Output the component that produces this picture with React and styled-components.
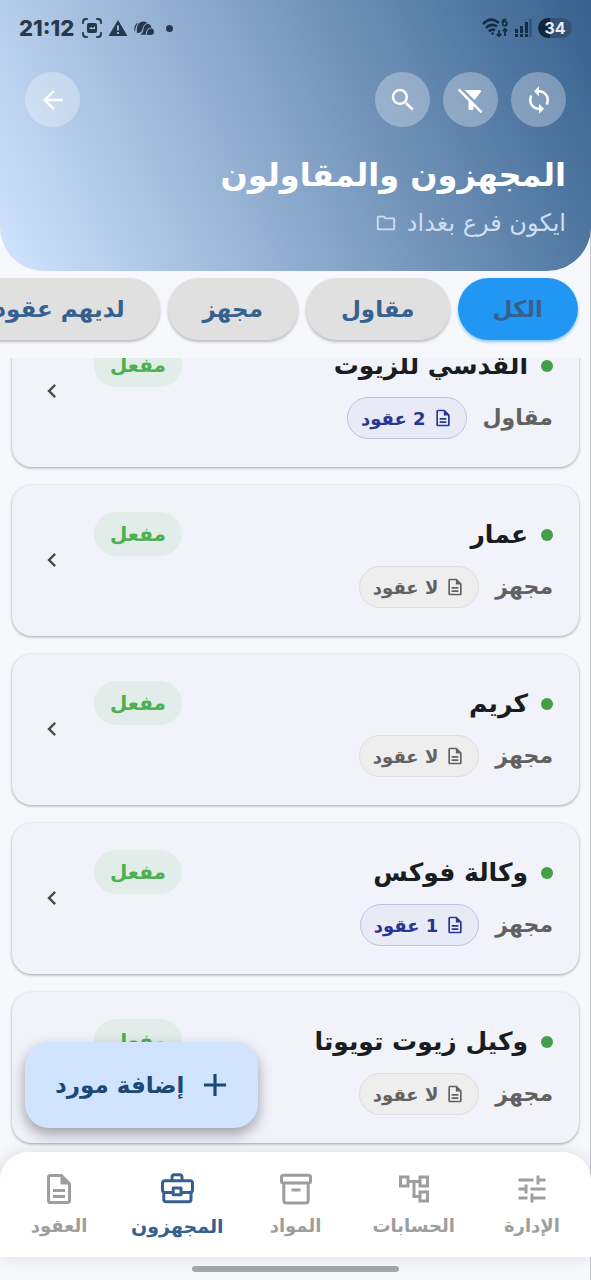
import React from "react"
import styled, { createGlobalStyle } from "styled-components"
import {
  MdAdd,
  MdArrowBack,
  MdChevronLeft,
  MdFilterAltOff,
  MdOutlineAccountTree,
  MdOutlineDescription,
  MdOutlineFolder,
  MdSearch,
  MdSync,
  MdTune,
} from "react-icons/md"

const GlobalStyle = createGlobalStyle`
  * {
    box-sizing: border-box;
  }

  body {
    margin: 0;
    background: #f6f8fc;
    font-family: "DejaVu Sans", "Noto Sans", sans-serif;
  }

  button {
    font-family: inherit;
    border: 0;
    cursor: pointer;
  }
`

const suppliers = [
  { name: "القدسي للزيوت", type: "مقاول", contracts: 2 },
  { name: "عمار", type: "مجهز", contracts: 0 },
  { name: "كريم", type: "مجهز", contracts: 0 },
  { name: "وكالة فوكس", type: "مجهز", contracts: 1 },
  { name: "وكيل زيوت تويوتا", type: "مجهز", contracts: 0 },
]

const filters = ["الكل", "مقاول", "مجهز", "لديهم عقود"]

const BriefcaseIcon = () => (
  <svg viewBox="0 0 36 36" fill="none" stroke="currentColor" strokeWidth="3" strokeLinejoin="round">
    <path d="M13 9.5V6.2Q13 3.8 15.5 3.8h5Q23 3.8 23 6.2v3.3" />
    <path d="M13.5 21.5H6q-2.5 0-2.5-2.5v-6.8q0-2.5 2.5-2.5h25q2.5 0 2.5 2.5V19q0 2.5-2.5 2.5h-8" />
    <path d="M4.8 21.5v6.8q0 2.4 2.4 2.4h22.4q2.4 0 2.4-2.4v-6.8" />
    <rect x="14.2" y="17" width="7.8" height="6.8" />
  </svg>
)

const BoxIcon = () => (
  <svg viewBox="0 0 36 36" fill="none" stroke="currentColor" strokeWidth="3" strokeLinejoin="round">
    <rect x="3.5" y="4.3" width="29" height="7.8" rx="2" />
    <path d="M5.8 12.5v17q0 2.5 2.5 2.5h19.4q2.5 0 2.5-2.5v-17M13.5 19h9" />
  </svg>
)

const tabs = [
  { label: "الإدارة", icon: <MdTune /> },
  { label: "الحسابات", icon: <MdOutlineAccountTree /> },
  { label: "المواد", icon: <BoxIcon /> },
  { label: "المجهزون", icon: <BriefcaseIcon />, active: true },
  { label: "العقود", icon: <MdOutlineDescription /> },
]

const CaptureIcon = () => (
  <svg viewBox="0 0 20 20" width="20" height="20" fill="none" stroke="currentColor" strokeWidth="2" strokeLinecap="round">
    <path d="M1 5V4q0-3 3-3h1M15 1h1q3 0 3 3v1M19 15v1q0 3-3 3h-1M5 19H4q-3 0-3-3v-1" />
    <path fill="currentColor" stroke="none" fillRule="evenodd" d="M7 5h6q2 0 2 2v6q0 2-2 2H7q-2 0-2-2V7q0-2 2-2zm0 6 2-2 2 1 2-2v3z" />
  </svg>
)

const WarningIcon = () => (
  <svg viewBox="0 0 20 18" width="20" height="18" fill="currentColor">
    <path fillRule="evenodd" d="M10 1 19.5 17H.5zM9 6.5v5h2v-5zM9 13v2h2v-2z" />
  </svg>
)

const CloudIcon = () => (
  <svg viewBox="0 0 20 15" width="20" height="15" fill="currentColor">
    <path d="M2.5 2.5Q-1 6 1 11.5Q.8 6 4 2z" />
    <path d="M3 12Q2 4 6 1.5Q10-.5 13.5 2Q9.5 3 8.5 8Q7.5 12.5 3 12z" />
    <path d="M6 13.8Q9.200 12 9.500 8Q10.200 3 14.500 2.800Q17 4 17.500 6.600Q12.500 6 11.800 13.800z" />
    <path d="M12.7 14Q13 7.5 17 7.3Q20 8 20 10.7Q20 14 16.5 14z" />
  </svg>
)

const WifiIcon = () => (
  <svg viewBox="0 0 27 20" width="27" height="20" fill="none" stroke="currentColor" strokeWidth="2.6">
    <path d="M1 6Q9-2 17 5M4 10Q9 4.5 15 8.5M7 13.5Q10 10.5 13 12.5" />
    <circle cx="10.5" cy="15.5" r="1.3" fill="currentColor" stroke="none" />
    <path strokeWidth="1.8" d="M17 12v6M14.8 16l2.200 2 2.200-2M23 18v-7M20.800 13l2.200-2 2.200 2" />
    <path strokeWidth="1.7" d="M24.5 1.5Q20.300.8 20.500 5" />
    <circle cx="22.7" cy="5.500" r="2.100" strokeWidth="1.7" />
  </svg>
)

const SignalIcon = () => (
  <svg viewBox="0 0 17 18" width="17" height="18" fill="currentColor">
    <path d="M0 10h3v4H0zM5 7h3v7H5zM10 3h3v11h-3zM0 15h3v3H0zM5 15h3v3H5zM10 15h3v3h-3z" />
    <path opacity=".35" d="M14 0h3v18h-3z" />
  </svg>
)

export default function App() {
  return (
    <>
      <GlobalStyle />
      <Screen dir="rtl">
        <Header>
          <StatusBar dir="ltr">
            <StatusGroup>
              <Clock>21:12</Clock>
              <CaptureIcon />
              <WarningIcon />
              <CloudIcon />
              <StatusDot />
            </StatusGroup>
            <StatusGroup $dark>
              <WifiIcon />
              <SignalIcon />
              <Battery>34</Battery>
            </StatusGroup>
          </StatusBar>

          <Toolbar>
            <Actions>
              <RoundButton aria-label="تحديث"><MdSync /></RoundButton>
              <RoundButton aria-label="إلغاء التصفية"><MdFilterAltOff /></RoundButton>
              <RoundButton aria-label="بحث"><MdSearch /></RoundButton>
            </Actions>
            <RoundButton aria-label="رجوع"><MdArrowBack /></RoundButton>
          </Toolbar>

          <Title>المجهزون والمقاولون</Title>
          <Branch>
            ايكون فرع بغداد
            <MdOutlineFolder size={22} />
          </Branch>
        </Header>

        <Filters>
          {filters.map((label, index) => (
            <Chip key={label} $active={index === 0}>{label}</Chip>
          ))}
        </Filters>

        <Content>
          <Scroller>
            <Cards>
              {suppliers.map((supplier) => (
                <Card key={supplier.name}>
                  <Info>
                    <NameRow>
                      <Dot />
                      <Name>{supplier.name}</Name>
                    </NameRow>
                    <TypeRow>
                      <Type>{supplier.type}</Type>
                      <Contracts $some={supplier.contracts > 0}>
                        <MdOutlineDescription size={20} />
                        {supplier.contracts > 0 ? `${supplier.contracts} عقود` : "لا عقود"}
                      </Contracts>
                    </TypeRow>
                  </Info>
                  <Status>مفعل</Status>
                  <Chevron><MdChevronLeft size={28} /></Chevron>
                </Card>
              ))}
            </Cards>
          </Scroller>
          <AddButton>
            <MdAdd size={38} />
            إضافة مورد
          </AddButton>
        </Content>

        <TabBar>
          {tabs.map((tab) => (
            <Tab key={tab.label} href="#" $active={tab.active}>
              {tab.icon}
              <span>{tab.label}</span>
            </Tab>
          ))}
        </TabBar>
        <GestureArea>
          <GestureBar />
        </GestureArea>
      </Screen>
    </>
  )
}

const Screen = styled.div`
  display: flex;
  flex-direction: column;
  height: 100vh;
  overflow: hidden;
  background: #f6f8fc;
  box-shadow: inset -1px 0 0 #c3c6cd;
`

const Header = styled.header`
  flex: none;
  padding: 0 25px 32px;
  border-radius: 0 0 44px 44px;
  background: linear-gradient(245deg, #36618e, #d1e4ff);
  color: #fff;
`

const StatusBar = styled.div`
  display: flex;
  justify-content: space-between;
  align-items: center;
  height: 56px;
  margin: 0 -6px;
`

const StatusGroup = styled.div`
  display: flex;
  align-items: center;
  gap: 6px;
  color: ${(props) => (props.$dark ? "#152c44" : "#26394d")};
`

const Clock = styled.span`
  font: 800 22px "Inter", sans-serif;
  margin-right: 2px;
`

const StatusDot = styled.span`
  width: 7px;
  height: 7px;
  margin-left: 6px;
  border-radius: 50%;
  background: currentColor;
`

const Battery = styled.span`
  width: 34px;
  border-radius: 10px;
  background: linear-gradient(to right, #12263b 34%, #35516f 34%);
  color: #e3ecf5;
  font: 700 16px/20px "Inter", sans-serif;
  text-align: center;
`

const Toolbar = styled.div`
  display: flex;
  justify-content: space-between;
  padding-top: 16px;
`

const Actions = styled.div`
  display: flex;
  gap: 13px;
`

const RoundButton = styled.button`
  display: flex;
  justify-content: center;
  align-items: center;
  width: 55px;
  height: 55px;
  padding: 0;
  border-radius: 50%;
  background: rgba(255, 255, 255, 0.3);
  color: #fff;
  font-size: 30px;
`

const Title = styled.h1`
  margin: 24px 0 0;
  font-size: 32px;
  line-height: 48px;
`

const Branch = styled.div`
  display: flex;
  align-items: center;
  gap: 10px;
  margin-top: 8px;
  color: #d0def2;
  font-size: 24px;
  line-height: 32px;
`

const Filters = styled.div`
  display: flex;
  flex: none;
  gap: 8px;
  padding: 7px 13px 18px;
  overflow: hidden;
`

const Chip = styled.button`
  flex: none;
  height: 62px;
  padding: 0 35px;
  border-radius: 31px;
  background: ${(props) => (props.$active ? "#2196f3" : "#e0e0e0")};
  box-shadow: 0 2px 3px ${(props) => (props.$active ? "rgba(33, 150, 243, 0.5)" : "rgba(0, 0, 0, 0.25)")};
  color: #36618e;
  font-size: 23px;
  font-weight: 700;
`

const Content = styled.main`
  position: relative;
  flex: 1;
  min-height: 0;
`

/* reversed so the list opens at its latest entries */
const Scroller = styled.div`
  display: flex;
  flex-direction: column-reverse;
  height: 100%;
  overflow-y: auto;
  scrollbar-width: none;
`

const Cards = styled.div`
  display: flex;
  flex-direction: column;
  gap: 18px;
  padding: 0 12px 9px;
`

const Card = styled.article`
  display: flex;
  align-items: flex-start;
  padding: 27px 26px 28px;
  border-radius: 20px;
  background: #f1f2fa;
  box-shadow: 0 1px 3px rgba(0, 0, 0, 0.35);
`

const Info = styled.div`
  flex: 1;
`

const NameRow = styled.div`
  display: flex;
  align-items: center;
  gap: 13px;
`

const Dot = styled.span`
  width: 12px;
  height: 12px;
  border-radius: 50%;
  background: #43a047;
`

const Name = styled.h2`
  margin: 0;
  color: #191c20;
  font-size: 25px;
  line-height: 46px;
`

const TypeRow = styled.div`
  display: flex;
  align-items: center;
  gap: 16px;
  margin-top: 8px;
`

const Type = styled.span`
  color: #616161;
  font-size: 22px;
  font-weight: 700;
  line-height: 40px;
`

const Contracts = styled.span`
  display: flex;
  align-items: center;
  gap: 7px;
  height: 42px;
  padding: 0 13px;
  border: 1px solid ${(props) => (props.$some ? "#bcc3e8" : "#dedede")};
  border-radius: 21px;
  background: ${(props) => (props.$some ? "#e8eaf6" : "#eeeeee")};
  color: ${(props) => (props.$some ? "#283593" : "#616161")};
  font-size: 18px;
  font-weight: 700;
`

const Status = styled.span`
  padding: 0 16px;
  border-radius: 22px;
  background: #e2ede9;
  color: #4caf50;
  font-size: 20px;
  font-weight: 700;
  line-height: 44px;
`

const Chevron = styled.span`
  display: flex;
  align-self: center;
  margin-right: 28px;
  color: #43474e;
`

const AddButton = styled.button`
  position: absolute;
  left: 25px;
  bottom: 24px;
  display: flex;
  align-items: center;
  gap: 12px;
  height: 86px;
  padding: 0 24px 0 30px;
  border-radius: 24px;
  background: #d1e4ff;
  box-shadow: 0 6px 14px rgba(0, 0, 0, 0.35);
  color: #194975;
  font-size: 23px;
  font-weight: 700;
`

const TabBar = styled.nav`
  position: relative;
  display: flex;
  flex: none;
  height: 105px;
  border-radius: 28px 28px 0 0;
  background: #fff;
  box-shadow: 0 0 16px rgba(0, 0, 0, 0.12);
`

const Tab = styled.a`
  display: flex;
  flex: 1;
  flex-direction: column;
  align-items: center;
  gap: 3px;
  padding-top: 19px;
  color: ${(props) => (props.$active ? "#36618e" : "#9e9e9e")};
  font-size: ${(props) => (props.$active ? "19px" : "18px")};
  font-weight: 700;
  line-height: 32px;
  text-decoration: none;

  svg {
    width: 36px;
    height: 36px;
  }
`

const GestureArea = styled.div`
  display: flex;
  flex: none;
  justify-content: center;
  align-items: center;
  height: 23px;
`

const GestureBar = styled.div`
  width: 35%;
  height: 6px;
  border-radius: 3px;
  background: #a6a7a9;
`
